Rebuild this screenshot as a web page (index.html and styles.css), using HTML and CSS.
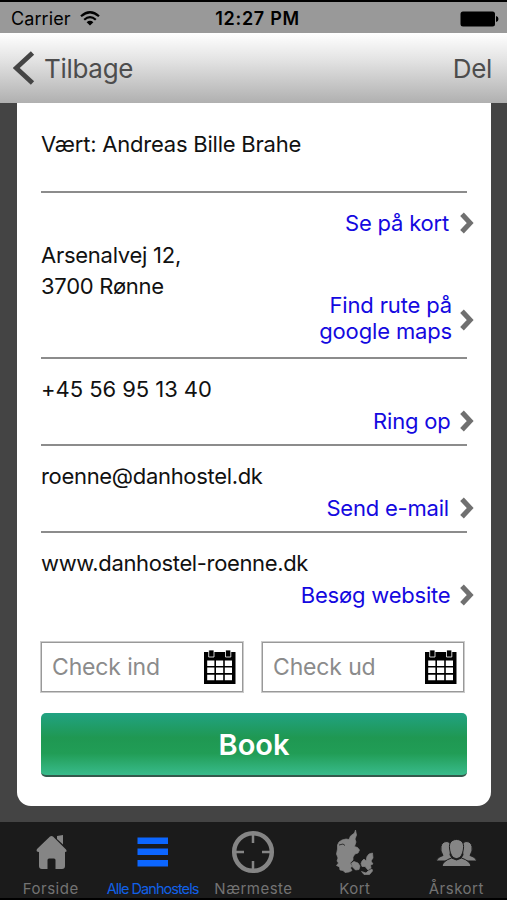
FILE: index.html
```
<!DOCTYPE html>
<html lang="da">
<head>
<meta charset="utf-8">
<title>Danhostel Rønne</title>
<link rel="stylesheet" href="styles.css">
</head>
<body>
<svg class="defs" width="0" height="0">
  <symbol id="chevron" viewBox="0 0 14 22"><path d="M2 2.2 10.2 11 2 19.8" fill="none" stroke="#707070" stroke-width="5"/></symbol>
  <symbol id="calendar" viewBox="0 0 32 36">
    <path d="M0 3H31.500V35H0Z" fill="#000"/>
    <path d="M3.2 11.5H10.4V17H3.2ZM12 11.5H19.2V17H12ZM20.8 11.5H28V17H20.8ZM3.2 18.6H10.4V24.1H3.2ZM12 18.6H19.2V24.1H12ZM20.8 18.6H28V24.1H20.8ZM3.2 25.7H10.4V31.2H3.2ZM12 25.7H19.2V31.2H12ZM20.8 25.7H28V31.2H20.8Z" fill="#fff"/>
    <path d="M4.7 1H10V8H4.7ZM21.500 1H26.800V8H21.500Z" fill="#000" stroke="#fff" stroke-width=".8"/>
  </symbol>
</svg>
<header class="status">
  <div class="carrier"><span>Carrier</span>
    <svg width="20" height="15" viewBox="0 0 20 15"><g fill="none" stroke="#000" stroke-width="2.2"><path d="M1 5.3Q10 -2.8 19 5.3"/><path d="M4.2 8.8Q10 3.5 15.8 8.8"/></g><path d="M6.6 11.2Q10 8.3 13.4 11.2L10 14.6Z"/></svg>
  </div>
  <div class="clock">12:27 PM</div>
  <svg class="battery" width="39" height="16" viewBox="0 0 39 16"><rect x=".5" y=".5" width="34.5" height="15" rx="2.5"/><path d="M36 5Q38.5 5.5 38.5 8T36 11Z"/></svg>
</header>
<nav class="navbar">
  <a class="back"><svg width="22" height="34" viewBox="0 0 22 34"><path d="M19.5 2 3.2 17 19.5 32" fill="none" stroke="#444" stroke-width="4.8"/></svg><span>Tilbage</span></a>
  <a class="share">Del</a>
</nav>
<main class="content">
  <section class="card">
    <div class="row host"><p class="t-host">Vært: Andreas Bille Brahe</p></div>
    <div class="row address">
      <p>Arsenalvej 12,<br>3700 Rønne</p>
      <div class="links">
        <a class="link"><span class="t-map">Se på kort</span><svg><use href="#chevron"/></svg></a>
        <a class="link two"><span class="t-route">Find rute på<br>google maps</span><svg><use href="#chevron"/></svg></a>
      </div>
    </div>
    <div class="row contact"><p class="t-phone">+45 56 95 13 40</p><a class="link near"><span class="t-ring">Ring op</span><svg><use href="#chevron"/></svg></a></div>
    <div class="row contact"><p class="t-mail">roenne@danhostel.dk</p><a class="link"><span class="t-send">Send e-mail</span><svg><use href="#chevron"/></svg></a></div>
    <div class="row contact last"><p class="t-web">www.danhostel-roenne.dk</p><a class="link near"><span class="t-visit">Besøg website</span><svg><use href="#chevron"/></svg></a></div>
    <div class="dates">
      <div class="date"><span>Check ind</span><svg><use href="#calendar"/></svg></div>
      <div class="date"><span>Check ud</span><svg><use href="#calendar"/></svg></div>
    </div>
    <div class="book">Book</div>
  </section>
</main>
<footer class="tabs">
  <a class="tab"><svg width="50" height="50" viewBox="0 0 50 50"><path d="M24 13.500 11 26Q9.500 29 13 29V43Q13 46 16 46H21.500V37Q21.500 35.500 23 35.500H28Q29.500 35.500 29.500 37V46H36Q39 46 39 43V29Q41.500 29 40 26.500L27 13.500Q25.500 12.300 24 13.500ZM31 13 37 12V21.500L31 16Z"/></svg><span class="t-forside">Forside</span></a>
  <a class="tab active"><svg width="50" height="50" viewBox="0 0 50 50"><path d="M10.500 14.500H41V21H10.500ZM10.500 25.500H41V32H10.500ZM10.500 37H41V43.500H10.500Z"/></svg><span class="t-alle">Alle Danhostels</span></a>
  <a class="tab"><svg width="50" height="50" viewBox="0 0 50 50"><g fill="none" stroke="#858585"><circle cx="25" cy="29" r="18.800" stroke-width="4.500"/><path d="M25 10V20M25 38V48M6 29H16M34 29H44" stroke-width="2.500"/></g></svg><span>Nærmeste</span></a>
  <a class="tab"><svg width="50" height="50" viewBox="0 0 50 50"><path d="M25.500 7 24.500 10 20.500 13 19 16.500 16 16 12 17 9 19 7.500 22 7.500 26 6.500 31 8 35 7 38 8.500 40 6.500 42.500 9.500 44 10 47 13 47.500 15 49.500 19 49 22 47.500 20.500 45 22 43 20 40 23 37 23 34 25 31 28 30 29.500 27 27.500 24.500 24.500 23.500 26 19 25 16 26.500 12ZM21.500 40 24 38.500 28 40 30 43 29 46.500 25.500 47 22.500 44ZM32 38 34 36 36 38 37 33.500 39 31 42.500 30 43 35 41 38 43 41 40.500 42 41 45 38 47 35 43.500 32 43.500 31 40.500ZM31.500 48.500 36 50 38 48 42 46 42.500 48 39.500 51.500 34 51.500Z" stroke="#858585" stroke-width=".7"/><path d="M9 22 13 21 15 22.500" fill="none" stroke="#1b1b1b" stroke-width=".8"/></svg><span>Kort</span></a>
  <a class="tab"><svg width="50" height="50" viewBox="0 0 50 50"><g stroke="#1b1b1b" stroke-width="1"><path d="M5 38Q7 33.500 12 32.500Q9 28 10 23.500Q11 18.500 16 18.500Q20 19 20 25L19 32 23 38H5ZM46 38Q44 33.500 39 32.500Q42 28 41 23.500Q40 18.500 35 18.500Q31 19 31 25L32 32 28 38H46Z"/><path d="M11 43.500Q11.500 38 20.500 35L25.500 37 30.500 35Q39.500 38 40 43.500Z"/><path d="M25.500 16.500C20 16.500 18 20.500 18.500 25C19 31 21.500 35.500 25.500 35.500S32 31 32.500 25C33 20.500 31 16.500 25.500 16.500Z"/></g></svg><span>Årskort</span></a>
</footer>
</body>
</html>
```
FILE: styles.css
```
* { box-sizing: border-box; }
body {
  margin: 0; width: 507px; height: 900px; overflow: hidden;
  display: flex; flex-direction: column;
  background: #444; color: #111;
  font-family: Inter, "Liberation Sans", sans-serif;
  font-size: 22px; line-height: 32px;
}
p { margin: 0; }
.defs { display: none; }
.status {
  height: 33px; flex: none; border-top: 2px solid #000; background: #999; color: #000;
  display: grid; grid-template-columns: 1fr auto 1fr; align-items: center;
  padding: 1px 8px 0 11px; font-size: 18px;
}
.carrier { display: flex; align-items: center; gap: 9px; letter-spacing: .1px; }
.carrier svg { margin-top: -2px; }
.clock { font-weight: 600; font-size: 18px; letter-spacing: .7px; padding-left: 5px; }
.battery { justify-self: end; }
.navbar {
  height: 70px; flex: none; display: flex; justify-content: space-between; align-items: center;
  padding: 0 15px 0 13px; color: #4d4d4d; font-size: 26px; letter-spacing: -.3px;
  background: linear-gradient(#fff, #e2e2e2 40%, #b0b0b0);
}
.back { display: flex; align-items: center; gap: 9px; }
.back span, .share { padding-top: 1px; }
.content { height: 719px; flex: none; padding: 0 16px 0 17px; }
.card { height: 703px; background: #fff; border-radius: 0 0 14px 14px; padding: 0 24px; }
.row { border-bottom: 2px solid #8c8c8c; }
.host { height: 90px; padding-top: 25px; letter-spacing: -.22px; }
.address { height: 166px; display: flex; justify-content: space-between; }
.address p { padding-top: 47px; line-height: 31px; letter-spacing: -.26px; }
.links { padding-top: 14px; display: flex; flex-direction: column; align-items: flex-end; gap: 53px; }
.link { color: #1409e0; display: flex; align-items: center; justify-content: flex-end; gap: 11px; margin-right: -7px; line-height: 32px; letter-spacing: -.2px; }
.link svg { width: 14px; height: 22px; }
.two { line-height: 26px; text-align: right; gap: 8px; letter-spacing: -.15px; }
.two svg { margin-top: 4px; }
.near { gap: 9.500px; }
.contact { height: 87px; padding-top: 14px; }
.t-phone { letter-spacing: -.05px; }
.t-mail { letter-spacing: -.32px; }
.t-web { letter-spacing: -.36px; }
.last { border: 0; }
.dates { display: flex; gap: 19px; margin-top: 22px; }
.date {
  width: 202px; height: 50px; border: 1.500px solid #999; outline: .5px solid #ccc; color: #8b8b8b; font-size: 23px; letter-spacing: -.15px;
  display: flex; justify-content: space-between; align-items: center; padding: 0 6px 0 10px;
}
.date svg { width: 32px; height: 36px; }
.book {
  height: 64px; margin-top: 21px; border-radius: 5px; border-bottom: 2px solid #34594c;
  background: linear-gradient(#21a282, #1f9852 40%, #219d56 65%, #39bb8c);
  color: #fff; font-weight: 600; font-size: 29px; line-height: 64px; text-align: center;
}
.tabs {
  height: 78px; flex: none; background: #1b1b1b; border-bottom: 2px solid #000;
  display: grid; grid-template-columns: repeat(5, 1fr);
  color: #737373; font-size: 15px; line-height: 20px;
}
.tab { display: flex; flex-direction: column; align-items: center; white-space: nowrap; }
.tab svg { height: 52px; flex: none; fill: #858585; overflow: visible; margin-bottom: 5px; }
.tab span { letter-spacing: .5px; }
.active { color: #1161e8; }
.active svg { fill: #0c66ff; }
.tab .t-alle { font-size: 14.500px; letter-spacing: -.95px; padding-left: 1px; }
```
